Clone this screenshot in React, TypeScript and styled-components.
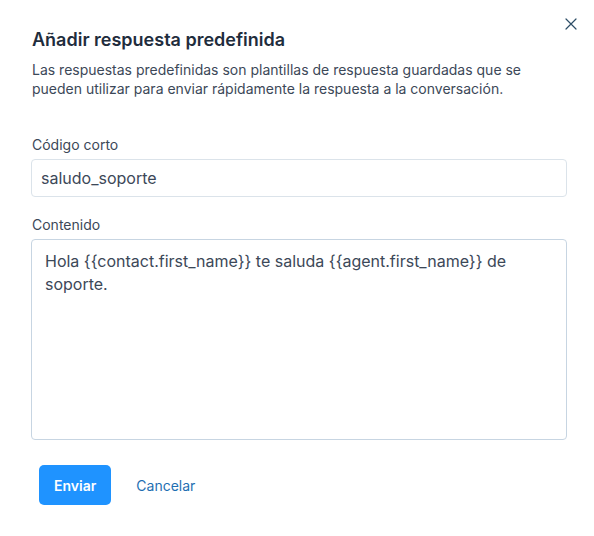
import React, { useState } from 'react';
import styled, { createGlobalStyle } from 'styled-components';

const GlobalStyle = createGlobalStyle`
  html, body {
    margin: 0;
    padding: 0;
    background: #ffffff;
    font-family: Inter, "Noto Sans", sans-serif;
    -webkit-font-smoothing: antialiased;
  }
  * {
    box-sizing: border-box;
  }
`;

const Modal = styled.div`
  position: relative;
  width: 594px;
  height: 536px;
  background: #ffffff;
`;

const CloseButton = styled.button`
  position: absolute;
  top: 13px;
  right: 12px;
  width: 22px;
  height: 22px;
  padding: 0;
  border: none;
  background: transparent;
  display: flex;
  align-items: center;
  justify-content: center;
  cursor: pointer;
  color: #2d4d66;
`;

const Header = styled.header`
  padding: 28px 32px 0 32px;
`;

const Title = styled.h2`
  margin: 0;
  font-size: 18px;
  line-height: 24px;
  font-weight: 600;
  color: #1f2d3d;
`;

const Description = styled.p`
  margin: 8px 0 0 0;
  font-size: 14px;
  line-height: 19px;
  font-weight: 400;
  color: #3c4858;
`;

const Form = styled.form`
  padding: 37px 27px 0 31px;
  display: flex;
  flex-direction: column;
`;

const Field = styled.label`
  display: flex;
  flex-direction: column;
  margin-bottom: 18px;
`;

const LabelText = styled.span`
  font-size: 14px;
  line-height: 20px;
  color: #3c4858;
  margin-bottom: 4px;
  padding-left: 1px;
`;

const TextInput = styled.input`
  height: 38px;
  width: 100%;
  padding: 0 9px;
  border: 1px solid #dbe3ea;
  border-radius: 4px;
  font-family: inherit;
  font-size: 16px;
  color: #3c4858;
  background: #ffffff;
  outline: none;
`;

const TextArea = styled.textarea`
  height: 201px;
  width: 100%;
  padding: 10px 13px;
  border: 1px solid #c7d5e2;
  border-radius: 4px;
  font-family: inherit;
  font-size: 16px;
  line-height: 23px;
  color: #3c4858;
  background: #ffffff;
  resize: none;
  outline: none;
`;

const Actions = styled.div`
  display: flex;
  align-items: center;
  gap: 5px;
  padding: 7px 0 0 8px;
`;

const Button = styled.button<{ variant?: 'primary' | 'link' }>`
  height: 40px;
  padding: 0 15px;
  border: none;
  border-radius: 5px;
  font-family: inherit;
  font-size: 14px;
  font-weight: ${(p) => (p.variant === 'link' ? 400 : 600)};
  cursor: pointer;
  background: ${(p) => (p.variant === 'link' ? 'transparent' : '#1f93ff')};
  color: ${(p) => (p.variant === 'link' ? '#1f6fb2' : '#ffffff')};
  ${(p) => p.variant === 'link' && 'padding: 0 20px;'}
`;

const App = () => {
  const [shortCode, setShortCode] = useState('saludo_soporte');
  const [content, setContent] = useState(
    'Hola {{contact.first_name}} te saluda {{agent.first_name}} de soporte.',
  );

  return (
    <Modal>
      <GlobalStyle />
      <CloseButton aria-label='Cerrar'>
        <svg width='12' height='12' viewBox='0 0 12 12' fill='none'>
          <path d='M1 1L11 11M11 1L1 11' stroke='currentColor' strokeWidth='1.2' strokeLinecap='round' />
        </svg>
      </CloseButton>
      <Header>
        <Title>Añadir respuesta predefinida</Title>
        <Description>
          Las respuestas predefinidas son plantillas de respuesta guardadas que se pueden utilizar para enviar
          rápidamente la respuesta a la conversación.
        </Description>
      </Header>
      <Form onSubmit={(e) => e.preventDefault()}>
        <Field>
          <LabelText>Código corto</LabelText>
          <TextInput type='text' value={shortCode} onChange={(e) => setShortCode(e.target.value)} />
        </Field>
        <Field>
          <LabelText>Contenido</LabelText>
          <TextArea value={content} onChange={(e) => setContent(e.target.value)} />
        </Field>
        <Actions>
          <Button type='submit'>Enviar</Button>
          <Button type='button' variant='link'>
            Cancelar
          </Button>
        </Actions>
      </Form>
    </Modal>
  );
};

export default App;
